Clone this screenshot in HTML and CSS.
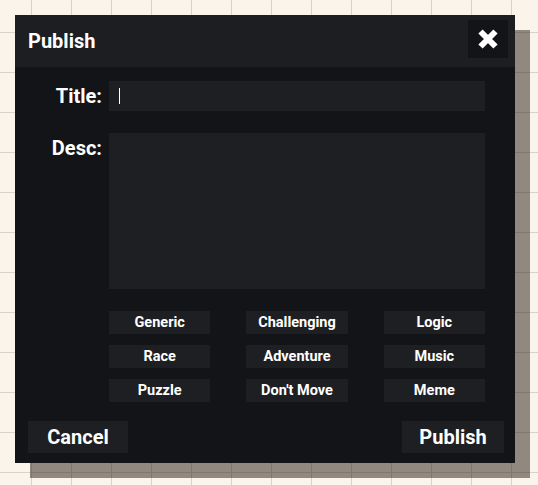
FILE: index.html
```html
<!DOCTYPE html>
<html>
<head>
<meta charset="utf-8">
<link rel="stylesheet" href="styles.css">
</head>
<body>
<div class="dialog">
  <div class="header">
    <span class="title">Publish</span>
    <button class="close" aria-label="Close">
      <svg width="22" height="22" viewBox="0 0 22 22"><path d="M3.5 3.5 L18.5 18.5 M18.5 3.5 L3.5 18.5" stroke="#fff" stroke-width="6" stroke-linecap="butt"/></svg>
    </button>
  </div>
  <div class="content">
    <div class="row title-row">
      <label class="label">Title:</label>
      <div class="input"><span class="caret"></span></div>
    </div>
    <div class="row desc-row">
      <label class="label">Desc:</label>
      <div class="textarea"></div>
    </div>
    <div class="tags">
      <div class="tag">Generic</div>
      <div class="tag">Challenging</div>
      <div class="tag">Logic</div>
      <div class="tag">Race</div>
      <div class="tag">Adventure</div>
      <div class="tag">Music</div>
      <div class="tag">Puzzle</div>
      <div class="tag">Don't Move</div>
      <div class="tag">Meme</div>
    </div>
    <div class="actions">
      <button class="btn cancel">Cancel</button>
      <button class="btn publish">Publish</button>
    </div>
  </div>
</div>
</body>
</html>
```

FILE: styles.css
```css
html, body {
  margin: 0;
  padding: 0;
}
body {
  width: 538px;
  height: 485px;
  overflow: hidden;
  background-color: #fbf4ea;
  background-image:
    linear-gradient(to right, #d8d2ca 0, #d8d2ca 1px, transparent 1px),
    linear-gradient(to bottom, #d8d2ca 0, #d8d2ca 1px, transparent 1px);
  background-size: 40px 40px;
  background-position: 31px 32px;
  font-family: Roboto, "Liberation Sans", sans-serif;
  padding: 15px;
  box-sizing: border-box;
}
.dialog {
  width: 500px;
  height: 448px;
  background: #121417;
  box-shadow: 15px 15px 0 rgba(40, 30, 20, 0.5);
  display: flex;
  flex-direction: column;
  color: #fff;
}
.header {
  height: 52px;
  background: #1c1e21;
  display: flex;
  align-items: center;
  justify-content: space-between;
  padding: 0 7px 0 13px;
}
.title {
  font-weight: 700;
  font-size: 20px;
}
.close {
  width: 40px;
  height: 38px;
  border: 0;
  background: #121417;
  display: flex;
  align-items: center;
  justify-content: center;
  padding: 0;
  margin-top: -4px;
}
.content {
  flex: 1;
  padding: 14px 30px 10px 13px;
  display: flex;
  flex-direction: column;
}
.row {
  display: flex;
  gap: 7px;
}
.label {
  width: 74px;
  text-align: right;
  font-weight: 700;
  font-size: 20px;
}
.title-row .label {
  line-height: 30px;
}
.input {
  flex: 1;
  height: 30px;
  background: #1d1f22;
  display: flex;
  align-items: center;
  padding-left: 10px;
}
.caret {
  width: 1px;
  height: 16px;
  background: #fff;
}
.desc-row {
  margin-top: 22px;
}
.desc-row .label {
  line-height: 30px;
}
.textarea {
  flex: 1;
  height: 156px;
  background: #1d1f22;
}
.tags {
  margin-top: 22px;
  margin-left: 81px;
  display: grid;
  grid-template-columns: repeat(3, 1fr);
  column-gap: 36px;
  row-gap: 11px;
}
.tag {
  height: 23px;
  background: #1d1f22;
  font-weight: 700;
  font-size: 14.5px;
  display: flex;
  align-items: center;
  justify-content: center;
  padding-bottom: 1px;
  box-sizing: border-box;
}
.actions {
  margin-top: 19px;
  margin-right: -19px;
  display: flex;
  justify-content: space-between;
}
.btn {
  height: 32px;
  border: 0;
  background: #1d1f22;
  color: #fff;
  font-family: Roboto, "Liberation Sans", sans-serif;
  font-weight: 700;
  font-size: 20px;
  padding: 0;
}
.cancel {
  width: 100px;
}
.publish {
  width: 102px;
}
```
